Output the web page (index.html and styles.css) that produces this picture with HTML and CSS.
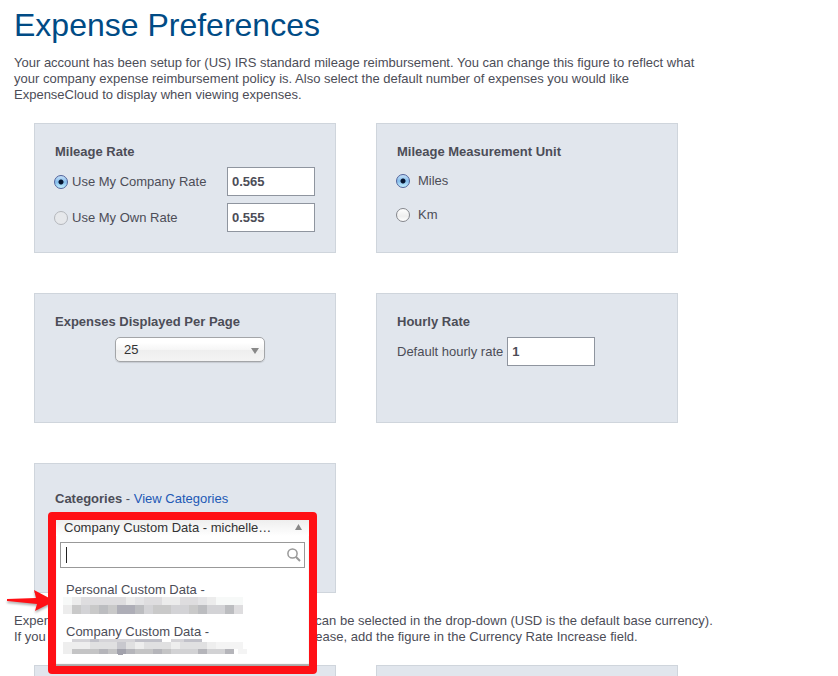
FILE: index.html
```
<!DOCTYPE html>
<html lang="en">
<head>
    <meta charset="UTF-8">
    <meta name="viewport" content="width=device-width, initial-scale=1.0">
    <title>Expense Preferences</title>
    <link rel="stylesheet" href="styles.css">
</head>
<body>
    <h1>Expense Preferences</h1>
    <p class="intro">
        Your account has been setup for (US) IRS standard mileage reimbursement. You can change this figure to reflect what<br>
        your company expense reimbursement policy is. Also select the default number of expenses you would like<br>
        ExpenseCloud to display when viewing expenses.
    </p>
    <form class="cards">
        <section class="card">
            <h2>Mileage Rate</h2>
            <div class="rate-row">
                <input type="radio" name="rate" id="company-rate" checked>
                <label for="company-rate">Use My Company Rate</label>
                <input type="text" class="number" aria-label="Company rate" value="0.565">
            </div>
            <div class="rate-row">
                <input type="radio" name="rate" id="own-rate" class="faded">
                <label for="own-rate">Use My Own Rate</label>
                <input type="text" class="number" aria-label="Own rate" value="0.555">
            </div>
        </section>
        <section class="card">
            <h2>Mileage Measurement Unit</h2>
            <div class="unit-row">
                <input type="radio" name="unit" id="miles" checked>
                <label for="miles">Miles</label>
            </div>
            <div class="unit-row">
                <input type="radio" name="unit" id="km">
                <label for="km">Km</label>
            </div>
        </section>
        <section class="card">
            <h2><label for="per-page">Expenses Displayed Per Page</label></h2>
            <div class="select">
                <select id="per-page">
                    <option>10</option>
                    <option selected>25</option>
                    <option>50</option>
                </select>
            </div>
        </section>
        <section class="card">
            <h2>Hourly Rate</h2>
            <div class="hourly-row">
                <label for="hourly">Default hourly rate</label>
                <input type="text" class="number" id="hourly" value="1">
            </div>
        </section>
        <section class="card categories">
            <h2>Categories <span>- <a href="#">View Categories</a></span></h2>
            <div class="dropdown">
                <button type="button" class="current">
                    <span>Company Custom Data - michelle…</span>
                    <svg width="7" height="6" viewBox="0 0 7 6"><path d="M0 6 3.500 0 7 6z" fill="#888"/></svg>
                </button>
                <div class="search">
                    <input type="text" aria-label="Search categories">
                    <span class="caret"></span>
                    <svg width="14" height="14" viewBox="0 0 14 14" fill="none" stroke="#999">
                        <circle cx="5.500" cy="5.500" r="4.600" stroke-width="1.500"/>
                        <path d="M8.800 8.800 13 13" stroke-width="2"/>
                    </svg>
                </div>
                <ul>
                    <li>
                        Personal Custom Data -
                        <svg width="190" height="17" viewBox="0 0 190 17" shape-rendering="crispEdges">
                            <path fill="#f7f9f8" d="M0 0h9v8H0zM153 0h27v8h-27z"/>
                            <path fill="#ececec" d="M9 0h9v8H9zM63 0h9v8h-9zM99 0h18v8H99zM144 0h9v8h-9zM0 8h9v9H0z"/>
                            <path fill="#dedddf" d="M18 0h45v8H18zM81 0h18v8H81zM117 0h18v8h-18zM171 8h9v9h-9z"/>
                            <path fill="#e4e4e6" d="M72 0h9v8h-9zM135 0h9v8h-9z"/>
                            <path fill="#c9c9c9" d="M9 8h9v9H9zM27 8h9v9h-9zM45 8h9v9h-9zM90 8h18v9H90zM126 8h9v9h-9z"/>
                            <path fill="#d3d3d6" d="M18 8h9v9h-9zM81 8h9v9h-9zM108 8h18v9h-18zM144 8h18v9h-18z"/>
                            <path fill="#bcbdc0" d="M36 8h9v9h-9zM72 8h9v9h-9zM135 8h9v9h-9zM162 8h9v9h-9z"/>
                            <path fill="#aeaeb7" d="M54 8h18v9H54z"/>
                        </svg>
                    </li>
                    <li>
                        Company Custom Data -
                        <svg width="190" height="17" viewBox="0 0 190 17" shape-rendering="crispEdges">
                            <path fill="#d5d4d8" d="M9 0h18v3H9zM36 0h36v3H36zM108 0h13v3h-13z"/>
                            <path fill="#c1c1c9" d="M27 0h9v3h-9zM72 0h27v3H72zM121 0h18v3h-18z"/>
                            <path fill="#eee" d="M0 3h27v7H0zM72 3h9v7h-9zM108 3h9v7h-9zM144 3h9v7h-9zM0 10h9v5H0z"/>
                            <path fill="#e0e0e1" d="M27 3h27v7H27zM63 3h9v7h-9zM81 3h27v7H81zM117 3h27v7h-27z"/>
                            <path fill="#c8c8ce" d="M54 3h9v7h-9z"/>
                            <path fill="#f4f4f4" d="M153 3h27v7h-27zM175 10h9v5h-9z"/>
                            <path fill="#c4c4c5" d="M9 10h27v5H9zM45 10h9v5h-9zM72 10h18v5H72zM99 10h9v5h-9z"/>
                            <path fill="#b5b5ba" d="M36 10h9v5h-9zM63 10h9v5h-9zM90 10h9v5h-9zM135 10h9v5h-9zM162 10h9v5h-9z"/>
                            <path fill="#d2d2d4" d="M108 10h27v5h-27zM144 10h18v5h-18z"/>
                            <path fill="#a2a2ac" d="M54 10h9v5h-9zM55 15h5v1h-5z"/>
                        </svg>
                    </li>
                </ul>
            </div>
            <svg class="arrow" width="44" height="28" viewBox="0 0 44 28">
                <path d="M0 11 29 10 27 2 44 11v4L28 23 30 16 0 13z" fill="#ff1015"/>
            </svg>
        </section>
    </form>
    <p class="currency">
        Expenses logged in more than one foreign currency can be selected in the drop-down (USD is the default base currency).<br>
        If you would like to add a standard currency rate increase, add the figure in the Currency Rate Increase field.
    </p>
    <div class="cards">
        <section class="card"></section>
        <section class="card"></section>
    </div>
</body>
</html>
```
FILE: styles.css
```
*{
    box-sizing: border-box;
}
body{
    margin: 0;
    padding: 6px 14px 0;
    background-color: white;
    color: #4c4d57;
    font-family: Arial, "Liberation Sans", Helvetica, sans-serif;
    font-size: 13px;
    line-height: 16px;
}
h1{
    margin: 0 0 11px;
    color: #004b85;
    font-size: 32px;
    font-weight: normal;
    line-height: 38px;
}
h2{
    margin: 0 0 7px;
    font-size: 13px;
    line-height: 16px;
}
h2 span{
    font-weight: normal;
}
p{
    margin: 0;
}
a{
    color: #2159b5;
    text-decoration: none;
}
.cards{
    display: grid;
    grid-template-columns: repeat(2, minmax(0, 302px));
    gap: 40px;
    padding: 20px;
}
.card{
    position: relative;
    min-height: 130px;
    padding: 20px 20px 12px;
    background-color: #e1e6ed;
    border: 1px solid #cfd5dc;
}
.categories{
    padding-top: 27px;
}
.rate-row, .unit-row, .hourly-row{
    display: flex;
    align-items: center;
    gap: 4px;
    margin-bottom: 7px;
}
.rate-row .number{
    margin-left: auto;
}
.unit-row{
    gap: 8px;
    height: 27px;
}
input[type="radio"]{
    appearance: none;
    width: 14px;
    height: 14px;
    margin: 0 0 0 -1px;
    border: 1px solid #85878c;
    border-radius: 50%;
    background: linear-gradient(#fff, #eee 60%, #fff);
}
input[type="radio"]:checked{
    border-color: #50629b;
    background: radial-gradient(circle, #051530 0 2px, transparent 3px), linear-gradient(#c5e0f8, #85bdec 50%, #c2f0ff);
}
input[type="radio"].faded{
    border-color: #b4b7bc;
    background: #e6e8eb;
}
.number{
    width: 88px;
    height: 29px;
    padding: 0 4px;
    border: 1px solid #8f959f;
    background-color: white;
    color: #4c4d57;
    font: bold 13px Arial, "Liberation Sans", sans-serif;
}
.select{
    position: relative;
    width: 150px;
    margin-left: 60px;
}
.select select{
    display: block;
    appearance: none;
    width: 100%;
    height: 25px;
    padding: 0 8px;
    border: 1px solid #a3a5a8;
    border-radius: 5px;
    background: linear-gradient(#fff 20%, #f6f6f6 50%, #eee 52%, #f4f4f4);
    box-shadow: 0 1px 1px rgba(0, 0, 0, 0.12);
    color: #333;
    font: 13px Arial, "Liberation Sans", sans-serif;
}
.select::after{
    content: "";
    position: absolute;
    right: 6px;
    top: 11px;
    border: 4px solid transparent;
    border-top: 6px solid #888;
    border-bottom: 0;
}
/* open category list */
.dropdown{
    position: absolute;
    z-index: 1;
    left: 13px;
    top: 48px;
    width: 269px;
    border: 8px solid #ff1015;
    border-radius: 4px;
    background-color: white;
    box-shadow: inset 0 -2px 1px #aaa;
}
.current{
    display: flex;
    align-items: center;
    justify-content: space-between;
    width: 100%;
    height: 16px;
    padding: 0 7px 2px 8px;
    border: 0;
    background: linear-gradient(#eee, #fff);
    color: #333;
    font: 13px Arial, "Liberation Sans", sans-serif;
}
.search{
    position: relative;
    margin: 6px 4px 14px;
}
.search input{
    display: block;
    width: 100%;
    height: 26px;
    padding: 0 24px 0 5px;
    border: 1px solid #999;
}
.search svg{
    position: absolute;
    right: 4px;
    top: 6px;
}
.caret{
    position: absolute;
    left: 6px;
    top: 5px;
    width: 1px;
    height: 16px;
    background-color: #222;
}
.dropdown ul{
    margin: 0;
    padding: 0 10px;
    list-style: none;
}
.dropdown li{
    height: 42px;
}
.dropdown li svg{
    display: block;
    margin: -1px 0 0 -3px;
}
.arrow{
    position: absolute;
    left: -28px;
    top: 124px;
    filter: drop-shadow(0 2px 1px rgba(0, 0, 0, 0.3));
}
```
